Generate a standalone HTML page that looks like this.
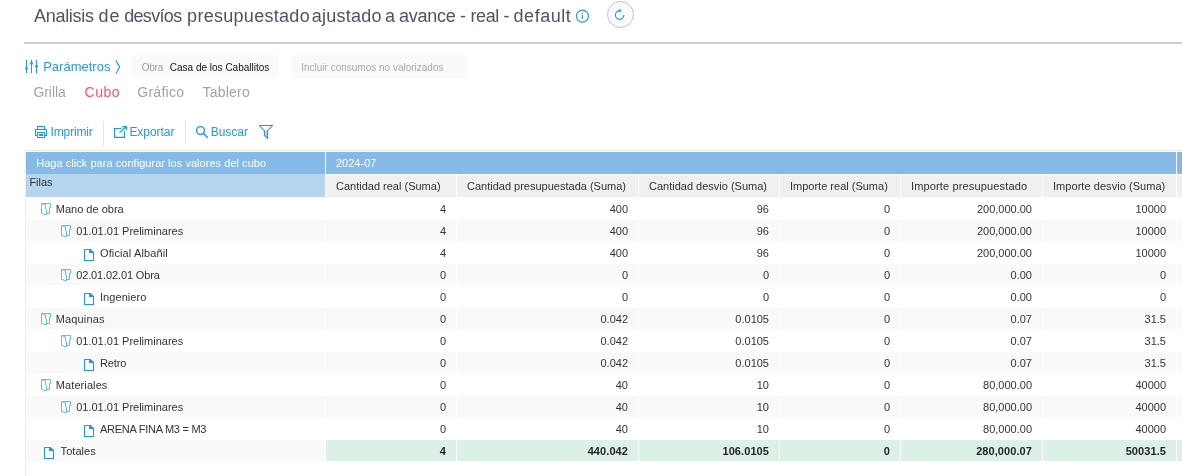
<!DOCTYPE html>
<html lang="es"><head><meta charset="utf-8"><title>Analisis de desvíos presupuestado ajustado a avance - real - default</title>
<style>
*{box-sizing:border-box}
html,body{margin:0;padding:0;background:#fff}
body{width:1182px;height:476px;overflow:hidden;position:relative;will-change:transform;font-family:"Liberation Sans",sans-serif;color:#333}
.a{position:absolute;white-space:nowrap}
.ic{position:absolute;overflow:visible}
.title{left:34px;top:3.6px;font-size:18px;line-height:24px;color:#4d5465}
.hr{left:24px;top:42px;right:0;height:2px;background:#cbcdd3}
.par{left:43.2px;top:55.5px;font-size:13px;line-height:22px;color:#2196f3;letter-spacing:0px}
.chip{top:55px;height:23px;border-radius:4px;background:#fafafa;font-size:10px;line-height:23px}
.chip span{top:1px}
.tab{top:81px;font-size:14px;line-height:22px;color:#a3a3a3}
.tb{top:121px;font-size:12px;line-height:22px;color:#2196f3}
.sep{top:121px;width:1px;height:24px;background:#e3e3e3}
.tw{left:25px;top:150px;right:0;bottom:0;border-left:1px solid #ececec;border-top:1px solid #e6e6e6}
.c{position:absolute;font-size:11px;line-height:22px;white-space:nowrap;overflow:hidden}
.h1{top:152px;height:22px;background:#85b9e6;color:#fff}
.h2{top:175px;height:22px;background:#f0f0f0;color:#333;padding-left:10px}
.n{height:21px;text-align:right;padding-right:10px;line-height:22px}
.n span,.l span{position:relative;top:-0.2px}
.g{background:#f9f9f9}
.t{background:#dcf0e6;font-weight:bold;color:#262626;letter-spacing:0.08px}
.l{left:26px;width:299px;height:21px}
</style></head>
<body>
<div class="a title" style="left:0;width:600px;height:24px;letter-spacing:0"><span class="a" style="left:34.0px;letter-spacing:-0.29px">Analisis</span> <span class="a" style="left:98.4px;letter-spacing:1.1px">de</span> <span class="a" style="left:124.2px;letter-spacing:-0.68px">desvíos</span> <span class="a" style="left:187.1px;letter-spacing:0.29px">presupuestado</span> <span class="a" style="left:311.8px;letter-spacing:0.24px">ajustado</span> <span class="a" style="left:384.9px;letter-spacing:0.0px">a</span> <span class="a" style="left:399.0px;letter-spacing:-0.24px">avance</span> <span class="a" style="left:460.1px;letter-spacing:0.0px">-</span> <span class="a" style="left:470.4px;letter-spacing:-0.37px">real</span> <span class="a" style="left:503.6px;letter-spacing:0.0px">-</span> <span class="a" style="left:513.6px;letter-spacing:0.52px">default</span> </div>
<svg class="ic" style="left:575px;top:9px" width="15" height="15" viewBox="575 9 15 15"><circle cx="582.4" cy="16.1" r="6" fill="none" stroke="#2196f3" stroke-width="1.1"/><rect x="581.75" y="12.8" width="1.3" height="1.4" fill="#2196f3"/><rect x="581.75" y="15" width="1.3" height="3.9" fill="#2196f3"/></svg>
<div class="a" style="left:607px;top:1px;width:27px;height:27px;border-radius:50%;border:1px solid #bfc2c9;background:#fafafa"></div>
<svg class="ic" style="left:607px;top:1px" width="27" height="27" viewBox="607 1 27 27"><path d="M619.6 10.9A4.2 4.2 0 1 0 623.8 15.1" fill="none" stroke="#2196f3" stroke-width="1.15"/><path d="M618.9 8.9L622 10.8L618.9 12.6Z" fill="#2196f3"/></svg>
<div class="a hr"></div>
<svg class="ic" style="left:24px;top:59px" width="16" height="16" viewBox="24 59 16 16"><g stroke="#2196f3" stroke-width="1.05" stroke-linecap="round"><path d="M26.5 60.3V72.7M31.5 60.3V72.7M36.5 60.3V72.7"/></g><g fill="#2196f3"><circle cx="26.5" cy="68.6" r="1.45"/><circle cx="31.5" cy="63.4" r="1.45"/><circle cx="36.5" cy="66.5" r="1.45"/></g></svg>
<div class="a par">Parámetros</div>
<svg class="ic" style="left:114px;top:59px" width="8" height="16" viewBox="114 59 8 16"><path d="M115.8 60.4L119.7 67.1L115.8 73.8" fill="none" stroke="#2196f3" stroke-width="1.1"/></svg>
<div class="a chip" style="left:131px;width:148px"><span class="a" style="left:10.7px;color:#a0a0a0;letter-spacing:-0.23px">Obra</span><span class="a" style="left:38.8px;color:#111">Casa de los Caballitos</span></div>
<div class="a chip" style="left:291px;width:176px;height:24px"><span class="a" style="left:10.2px;color:#a8a8a8">Incluir consumos no valorizados</span></div>
<div class="a tab" style="left:33.4px;letter-spacing:-0.05px">Grilla</div>
<div class="a tab" style="left:84.6px;letter-spacing:0.45px;color:#ff5060">Cubo</div>
<div class="a tab" style="left:137.2px;letter-spacing:0.3px">Gráfico</div>
<div class="a tab" style="left:202.6px;letter-spacing:0.21px">Tablero</div>
<svg class="ic" style="left:35px;top:126px" width="12" height="12" viewBox="0 0 12 12"><g fill="none" stroke="#2196f3" stroke-width="1.1"><rect x="2.5" y="0.5" width="7" height="3"/><rect x="0.5" y="3.5" width="11" height="6"/><rect x="2.5" y="6.5" width="7" height="5" fill="#fff"/></g><rect x="4" y="8" width="4" height="2" fill="#2196f3"/></svg>
<div class="a tb" style="left:50.6px;letter-spacing:-0.15px">Imprimir</div>
<div class="a sep" style="left:103px;height:25px"></div>
<svg class="ic" style="left:114px;top:126px" width="13" height="12" viewBox="0 0 13 12"><g fill="none" stroke="#2196f3" stroke-width="1.2"><path d="M7.5 2.5H0.6V11.4H10.4V5"/><path d="M5.5 6.5L12.3 0.7M8.3 0.6H12.4V4.2"/></g></svg>
<div class="a tb" style="left:129.4px;letter-spacing:-0.04px">Exportar</div>
<div class="a sep" style="left:185px;height:23px"></div>
<svg class="ic" style="left:195px;top:125px" width="14" height="14" viewBox="195 125 14 14"><circle cx="200.5" cy="130.5" r="3.9" fill="none" stroke="#2196f3" stroke-width="1.45"/><path d="M203.4 133.4L207.3 137.3" stroke="#2196f3" stroke-width="1.6" stroke-linecap="round"/></svg>
<div class="a tb" style="left:210.7px;letter-spacing:-0.02px">Buscar</div>
<svg class="ic" style="left:258px;top:124px" width="16" height="16" viewBox="258 124 16 16"><path d="M264.5 130.5V135.7L267.5 138.6V130.5Z" fill="#b4d4f1"/><path d="M259.4 125.5H272.7L267.6 130.6V138.4L264.4 135.6V130.6Z" fill="none" stroke="#2f8be0" stroke-width="1.02" stroke-linejoin="round"/></svg>
<div class="a tw"></div>
<div class="c h1" style="left:26px;width:299px;padding-left:10.2px;letter-spacing:0.04px">Haga click para configurar los valores del cubo</div>
<div class="c h1" style="left:326px;width:850px;padding-left:10px">2024-07</div>
<div class="c h1" style="left:1177px;width:10px"></div>
<div class="c" style="left:26px;top:174px;width:299px;height:23px;background:#b5d5ee;padding:1.3px 0 0 3.4px;line-height:14px;color:#333">Filas</div>
<div class="c h2" style="left:326px;width:130px;letter-spacing:0px">Cantidad real (Suma)</div>
<div class="c h2" style="left:457px;width:181px;letter-spacing:0px">Cantidad presupuestada (Suma)</div>
<div class="c h2" style="left:639px;width:140px;letter-spacing:0px">Cantidad desvio (Suma)</div>
<div class="c h2" style="left:780px;width:120px;letter-spacing:0px">Importe real (Suma)</div>
<div class="c h2" style="left:901px;width:141px;letter-spacing:0.145px">Importe presupuestado</div>
<div class="c h2" style="left:1043px;width:133px;letter-spacing:0.05px">Importe desvio (Suma)</div>
<div class="c h2" style="left:1177px;width:10px;padding:0"></div>
<div class="c l" style="top:198px;width:299px"><span class="a" style="left:29.8px;letter-spacing:0px">Mano de obra</span></div>
<svg class="ic" style="left:41px;top:203px" width="11" height="13" viewBox="0 0 11 13"><path d="M0.5 0.5H9.5V4.5H8.5V10.5H5.5M0.5 0.5V10.5L5.5 11.8V6.4L4.6 5.9V1.9L0.5 0.5" fill="none" stroke="#52c0da" stroke-width="0.95" stroke-linejoin="round"/></svg>
<div class="c n" style="left:326px;top:198px;width:130px"><span>4</span></div>
<div class="c n" style="left:457px;top:198px;width:181px"><span>400</span></div>
<div class="c n" style="left:639px;top:198px;width:140px"><span>96</span></div>
<div class="c n" style="left:780px;top:198px;width:120px"><span>0</span></div>
<div class="c n" style="left:901px;top:198px;width:141px"><span>200,000.00</span></div>
<div class="c n" style="left:1043px;top:198px;width:133px"><span>10000</span></div>
<div class="c n" style="left:1177px;top:198px;width:10px;padding:0"></div>
<div class="c l g" style="top:220px;width:299px"><span class="a" style="left:50.2px;letter-spacing:0px">01.01.01 Preliminares</span></div>
<svg class="ic" style="left:61px;top:225px" width="11" height="13" viewBox="0 0 11 13"><path d="M0.5 0.5H9.5V4.5H8.5V10.5H5.5M0.5 0.5V10.5L5.5 11.8V6.4L4.6 5.9V1.9L0.5 0.5" fill="none" stroke="#52c0da" stroke-width="0.95" stroke-linejoin="round"/></svg>
<div class="c n g" style="left:326px;top:220px;width:130px"><span>4</span></div>
<div class="c n g" style="left:457px;top:220px;width:181px"><span>400</span></div>
<div class="c n g" style="left:639px;top:220px;width:140px"><span>96</span></div>
<div class="c n g" style="left:780px;top:220px;width:120px"><span>0</span></div>
<div class="c n g" style="left:901px;top:220px;width:141px"><span>200,000.00</span></div>
<div class="c n g" style="left:1043px;top:220px;width:133px"><span>10000</span></div>
<div class="c n g" style="left:1177px;top:220px;width:10px;padding:0"></div>
<div class="c l" style="top:242px;width:299px"><span class="a" style="left:74.0px;letter-spacing:0.12px">Oficial Albañil</span></div>
<svg class="ic" style="left:84px;top:249px" width="11" height="13" viewBox="0 0 11 13"><path d="M0.5 0.5H6.5L9.5 3.5V11.5H0.5Z" fill="none" stroke="#2196f3" stroke-width="1.1"/><path d="M5 0.5H6.5L9.5 3.5V4H5Z" fill="#2196f3"/></svg>
<div class="c n" style="left:326px;top:242px;width:130px"><span>4</span></div>
<div class="c n" style="left:457px;top:242px;width:181px"><span>400</span></div>
<div class="c n" style="left:639px;top:242px;width:140px"><span>96</span></div>
<div class="c n" style="left:780px;top:242px;width:120px"><span>0</span></div>
<div class="c n" style="left:901px;top:242px;width:141px"><span>200,000.00</span></div>
<div class="c n" style="left:1043px;top:242px;width:133px"><span>10000</span></div>
<div class="c n" style="left:1177px;top:242px;width:10px;padding:0"></div>
<div class="c l g" style="top:264px;width:299px"><span class="a" style="left:50.2px;letter-spacing:-0.13px">02.01.02.01 Obra</span></div>
<svg class="ic" style="left:61px;top:269px" width="11" height="13" viewBox="0 0 11 13"><path d="M0.5 0.5H9.5V4.5H8.5V10.5H5.5M0.5 0.5V10.5L5.5 11.8V6.4L4.6 5.9V1.9L0.5 0.5" fill="none" stroke="#52c0da" stroke-width="0.95" stroke-linejoin="round"/></svg>
<div class="c n g" style="left:326px;top:264px;width:130px"><span>0</span></div>
<div class="c n g" style="left:457px;top:264px;width:181px"><span>0</span></div>
<div class="c n g" style="left:639px;top:264px;width:140px"><span>0</span></div>
<div class="c n g" style="left:780px;top:264px;width:120px"><span>0</span></div>
<div class="c n g" style="left:901px;top:264px;width:141px"><span>0.00</span></div>
<div class="c n g" style="left:1043px;top:264px;width:133px"><span>0</span></div>
<div class="c n g" style="left:1177px;top:264px;width:10px;padding:0"></div>
<div class="c l" style="top:286px;width:299px"><span class="a" style="left:74.0px;letter-spacing:0.06px">Ingeniero</span></div>
<svg class="ic" style="left:84px;top:293px" width="11" height="13" viewBox="0 0 11 13"><path d="M0.5 0.5H6.5L9.5 3.5V11.5H0.5Z" fill="none" stroke="#2196f3" stroke-width="1.1"/><path d="M5 0.5H6.5L9.5 3.5V4H5Z" fill="#2196f3"/></svg>
<div class="c n" style="left:326px;top:286px;width:130px"><span>0</span></div>
<div class="c n" style="left:457px;top:286px;width:181px"><span>0</span></div>
<div class="c n" style="left:639px;top:286px;width:140px"><span>0</span></div>
<div class="c n" style="left:780px;top:286px;width:120px"><span>0</span></div>
<div class="c n" style="left:901px;top:286px;width:141px"><span>0.00</span></div>
<div class="c n" style="left:1043px;top:286px;width:133px"><span>0</span></div>
<div class="c n" style="left:1177px;top:286px;width:10px;padding:0"></div>
<div class="c l g" style="top:308px;width:299px"><span class="a" style="left:29.8px;letter-spacing:0.14px">Maquinas</span></div>
<svg class="ic" style="left:41px;top:313px" width="11" height="13" viewBox="0 0 11 13"><path d="M0.5 0.5H9.5V4.5H8.5V10.5H5.5M0.5 0.5V10.5L5.5 11.8V6.4L4.6 5.9V1.9L0.5 0.5" fill="none" stroke="#52c0da" stroke-width="0.95" stroke-linejoin="round"/></svg>
<div class="c n g" style="left:326px;top:308px;width:130px"><span>0</span></div>
<div class="c n g" style="left:457px;top:308px;width:181px"><span>0.042</span></div>
<div class="c n g" style="left:639px;top:308px;width:140px"><span>0.0105</span></div>
<div class="c n g" style="left:780px;top:308px;width:120px"><span>0</span></div>
<div class="c n g" style="left:901px;top:308px;width:141px"><span>0.07</span></div>
<div class="c n g" style="left:1043px;top:308px;width:133px"><span>31.5</span></div>
<div class="c n g" style="left:1177px;top:308px;width:10px;padding:0"></div>
<div class="c l" style="top:330px;width:299px"><span class="a" style="left:50.2px;letter-spacing:0px">01.01.01 Preliminares</span></div>
<svg class="ic" style="left:61px;top:335px" width="11" height="13" viewBox="0 0 11 13"><path d="M0.5 0.5H9.5V4.5H8.5V10.5H5.5M0.5 0.5V10.5L5.5 11.8V6.4L4.6 5.9V1.9L0.5 0.5" fill="none" stroke="#52c0da" stroke-width="0.95" stroke-linejoin="round"/></svg>
<div class="c n" style="left:326px;top:330px;width:130px"><span>0</span></div>
<div class="c n" style="left:457px;top:330px;width:181px"><span>0.042</span></div>
<div class="c n" style="left:639px;top:330px;width:140px"><span>0.0105</span></div>
<div class="c n" style="left:780px;top:330px;width:120px"><span>0</span></div>
<div class="c n" style="left:901px;top:330px;width:141px"><span>0.07</span></div>
<div class="c n" style="left:1043px;top:330px;width:133px"><span>31.5</span></div>
<div class="c n" style="left:1177px;top:330px;width:10px;padding:0"></div>
<div class="c l g" style="top:352px;width:299px"><span class="a" style="left:74.0px;letter-spacing:-0.12px">Retro</span></div>
<svg class="ic" style="left:84px;top:359px" width="11" height="13" viewBox="0 0 11 13"><path d="M0.5 0.5H6.5L9.5 3.5V11.5H0.5Z" fill="none" stroke="#2196f3" stroke-width="1.1"/><path d="M5 0.5H6.5L9.5 3.5V4H5Z" fill="#2196f3"/></svg>
<div class="c n g" style="left:326px;top:352px;width:130px"><span>0</span></div>
<div class="c n g" style="left:457px;top:352px;width:181px"><span>0.042</span></div>
<div class="c n g" style="left:639px;top:352px;width:140px"><span>0.0105</span></div>
<div class="c n g" style="left:780px;top:352px;width:120px"><span>0</span></div>
<div class="c n g" style="left:901px;top:352px;width:141px"><span>0.07</span></div>
<div class="c n g" style="left:1043px;top:352px;width:133px"><span>31.5</span></div>
<div class="c n g" style="left:1177px;top:352px;width:10px;padding:0"></div>
<div class="c l" style="top:374px;width:299px"><span class="a" style="left:29.8px;letter-spacing:0.09px">Materiales</span></div>
<svg class="ic" style="left:41px;top:379px" width="11" height="13" viewBox="0 0 11 13"><path d="M0.5 0.5H9.5V4.5H8.5V10.5H5.5M0.5 0.5V10.5L5.5 11.8V6.4L4.6 5.9V1.9L0.5 0.5" fill="none" stroke="#52c0da" stroke-width="0.95" stroke-linejoin="round"/></svg>
<div class="c n" style="left:326px;top:374px;width:130px"><span>0</span></div>
<div class="c n" style="left:457px;top:374px;width:181px"><span>40</span></div>
<div class="c n" style="left:639px;top:374px;width:140px"><span>10</span></div>
<div class="c n" style="left:780px;top:374px;width:120px"><span>0</span></div>
<div class="c n" style="left:901px;top:374px;width:141px"><span>80,000.00</span></div>
<div class="c n" style="left:1043px;top:374px;width:133px"><span>40000</span></div>
<div class="c n" style="left:1177px;top:374px;width:10px;padding:0"></div>
<div class="c l g" style="top:396px;width:299px"><span class="a" style="left:50.2px;letter-spacing:0px">01.01.01 Preliminares</span></div>
<svg class="ic" style="left:61px;top:401px" width="11" height="13" viewBox="0 0 11 13"><path d="M0.5 0.5H9.5V4.5H8.5V10.5H5.5M0.5 0.5V10.5L5.5 11.8V6.4L4.6 5.9V1.9L0.5 0.5" fill="none" stroke="#52c0da" stroke-width="0.95" stroke-linejoin="round"/></svg>
<div class="c n g" style="left:326px;top:396px;width:130px"><span>0</span></div>
<div class="c n g" style="left:457px;top:396px;width:181px"><span>40</span></div>
<div class="c n g" style="left:639px;top:396px;width:140px"><span>10</span></div>
<div class="c n g" style="left:780px;top:396px;width:120px"><span>0</span></div>
<div class="c n g" style="left:901px;top:396px;width:141px"><span>80,000.00</span></div>
<div class="c n g" style="left:1043px;top:396px;width:133px"><span>40000</span></div>
<div class="c n g" style="left:1177px;top:396px;width:10px;padding:0"></div>
<div class="c l" style="top:418px;width:299px"><span class="a" style="left:74.0px;letter-spacing:-0.265px">ARENA FINA M3 = M3</span></div>
<svg class="ic" style="left:84px;top:425px" width="11" height="13" viewBox="0 0 11 13"><path d="M0.5 0.5H6.5L9.5 3.5V11.5H0.5Z" fill="none" stroke="#2196f3" stroke-width="1.1"/><path d="M5 0.5H6.5L9.5 3.5V4H5Z" fill="#2196f3"/></svg>
<div class="c n" style="left:326px;top:418px;width:130px"><span>0</span></div>
<div class="c n" style="left:457px;top:418px;width:181px"><span>40</span></div>
<div class="c n" style="left:639px;top:418px;width:140px"><span>10</span></div>
<div class="c n" style="left:780px;top:418px;width:120px"><span>0</span></div>
<div class="c n" style="left:901px;top:418px;width:141px"><span>80,000.00</span></div>
<div class="c n" style="left:1043px;top:418px;width:133px"><span>40000</span></div>
<div class="c n" style="left:1177px;top:418px;width:10px;padding:0"></div>
<div class="c l g" style="top:440px;width:299px"><span class="a" style="left:34.6px;letter-spacing:0.05px">Totales</span></div>
<svg class="ic" style="left:44px;top:447px" width="11" height="13" viewBox="0 0 11 13"><path d="M0.5 0.5H6.5L9.5 3.5V11.5H0.5Z" fill="none" stroke="#2196f3" stroke-width="1.1"/><path d="M5 0.5H6.5L9.5 3.5V4H5Z" fill="#2196f3"/></svg>
<div class="c n t" style="left:326px;top:440px;width:130px"><span>4</span></div>
<div class="c n t" style="left:457px;top:440px;width:181px"><span>440.042</span></div>
<div class="c n t" style="left:639px;top:440px;width:140px"><span>106.0105</span></div>
<div class="c n t" style="left:780px;top:440px;width:120px"><span>0</span></div>
<div class="c n t" style="left:901px;top:440px;width:141px"><span>280,000.07</span></div>
<div class="c n t" style="left:1043px;top:440px;width:133px"><span>50031.5</span></div>
<div class="c n t" style="left:1177px;top:440px;width:10px;padding:0"></div>
</body></html>
